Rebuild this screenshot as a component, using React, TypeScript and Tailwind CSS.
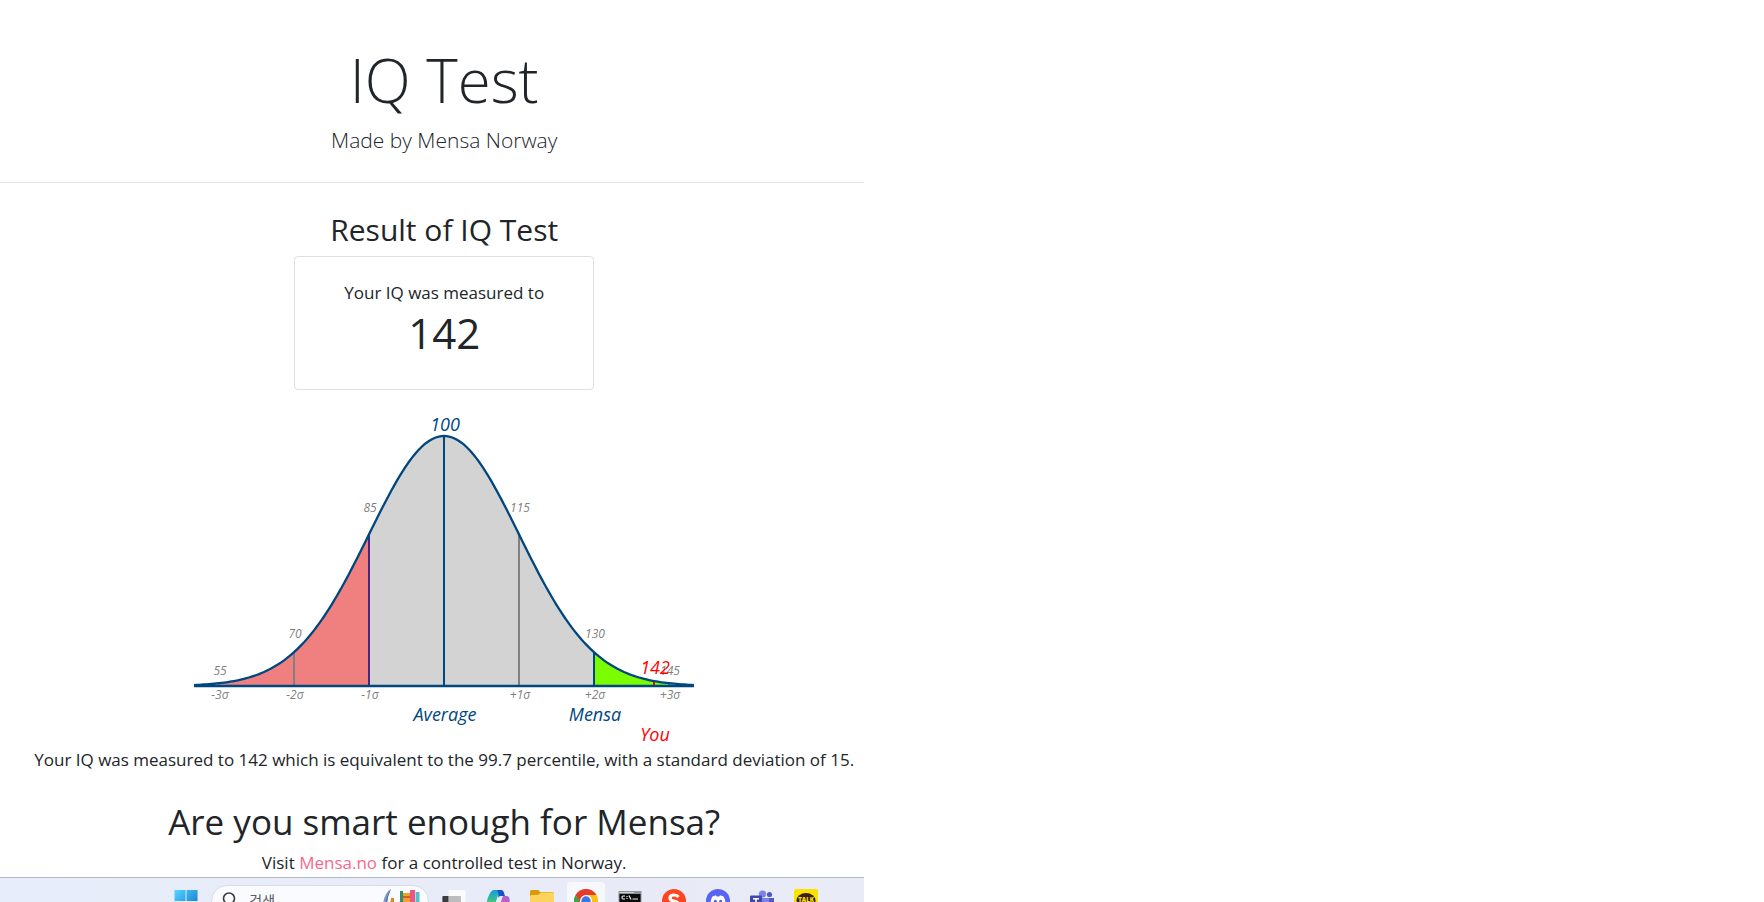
import React from "react";

const SIGMA = 75;
const CENTER = 250;
const BASE = 270;
const HEIGHT = 250;

const xOf = (iq: number) => CENTER + ((iq - 100) / 15) * SIGMA;
const yOf = (iq: number) => BASE - HEIGHT * Math.exp(-(((iq - 100) / 15) ** 2) / 2);

function curvePoints(from: number, to: number) {
  const points: string[] = [];
  for (let iq = from; iq <= to; iq += 0.5) {
    points.push(`${xOf(iq).toFixed(2)},${yOf(iq).toFixed(2)}`);
  }
  return points.join(" ");
}

function Area({ from, to, color }: { from: number; to: number; color: string }) {
  return <polygon fill={color} points={`${xOf(from)},${BASE} ${curvePoints(from, to)} ${xOf(to)},${BASE}`} />;
}

function Drop({ iq, color }: { iq: number; color: string }) {
  return <line x1={xOf(iq)} x2={xOf(iq)} y1={yOf(iq)} y2={BASE} stroke={color} strokeWidth={2} />;
}

const marks = [
  { iq: 55, y: 259, sigma: "-3σ" },
  { iq: 70, y: 222, sigma: "-2σ" },
  { iq: 85, y: 96, sigma: "-1σ" },
  { iq: 115, y: 96, sigma: "+1σ" },
  { iq: 130, y: 222, sigma: "+2σ" },
  { iq: 145, y: 259, sigma: "+3σ" },
];

function BellCurve() {
  return (
    <svg viewBox="0 0 500 330" role="img" aria-label="IQ distribution" className="mt-[26px] w-[500px] overflow-visible italic">
      <Area from={55} to={85} color="#f08080" />
      <Area from={85} to={130} color="#d3d3d3" />
      <Area from={130} to={145} color="#7cfc00" />
      <Drop iq={55} color="#808080" />
      <Drop iq={70} color="#808080" />
      <Drop iq={85} color="#4b2381" />
      <Drop iq={100} color="#00467f" />
      <Drop iq={115} color="#808080" />
      <Drop iq={130} color="#00467f" />
      <Drop iq={142} color="#ff0000" />
      <Drop iq={145} color="#808080" />
      <polyline fill="none" stroke="#00467f" strokeWidth={2.3} points={curvePoints(50, 150)} />
      <line x1={0} x2={500} y1={BASE} y2={BASE} stroke="#00467f" strokeWidth={2.6} />
      <g fill="#808080" fontSize={12} textAnchor="middle">
        {marks.map(({ iq, y, sigma }) => (
          <React.Fragment key={iq}>
            <text x={xOf(iq) + 1} y={y}>
              {iq}
            </text>
            <text x={xOf(iq) + 1} y={BASE + 13}>
              {sigma}
            </text>
          </React.Fragment>
        ))}
      </g>
      <g fill="#00467f" fontSize={18} textAnchor="middle">
        <text x={CENTER + 1} y={15}>
          100
        </text>
        <text x={CENTER + 1} y={BASE + 35}>
          Average
        </text>
        <text x={xOf(130) + 1} y={BASE + 35}>
          Mensa
        </text>
      </g>
      <g fill="#ff0000" fontSize={18} textAnchor="middle">
        <text x={xOf(142) + 1} y={258}>
          142
        </text>
        <text x={xOf(142) + 1} y={BASE + 55}>
          You
        </text>
      </g>
    </svg>
  );
}

function WindowsIcon() {
  return (
    <svg viewBox="0 0 24 24" className="size-6">
      <defs>
        <linearGradient id="win" x1="0" y1="0" x2="1" y2="1">
          <stop offset="0" stopColor="#55d6ff" />
          <stop offset="1" stopColor="#0669c9" />
        </linearGradient>
      </defs>
      <path fill="url(#win)" d="M.5 1H11.5V12H.5ZM12.5 1H23.5V12H12.5ZM.5 13H11.5V24H.5ZM12.5 13H23.5V24H12.5Z" />
    </svg>
  );
}

function TaskViewIcon() {
  return (
    <svg viewBox="0 0 24 24" className="size-6">
      <rect x="6.500" y="1" width="17" height="17" rx="1" fill="#fbfbfb" />
      <rect x=".5" y="7" width="18" height="17" rx="1" fill="#88888b" />
      <path d="M1.500 7H6.500V24H.5V8Q.5 7 1.500 7Z" fill="#3c3c3e" />
      <rect x="6.500" y="7" width="12" height="11" fill="#bcbcbf" />
    </svg>
  );
}

function CopilotIcon() {
  return (
    <svg viewBox="0 0 24 24" className="size-6">
      <defs>
        <linearGradient id="cp1" x1="0" y1="0" x2="0" y2="1">
          <stop offset="0" stopColor="#169be8" />
          <stop offset=".5" stopColor="#36c08c" />
          <stop offset="1" stopColor="#f0cf30" />
        </linearGradient>
        <linearGradient id="cp2" x1="1" y1="0" x2="0" y2="1">
          <stop offset="0" stopColor="#a45ce8" />
          <stop offset="1" stopColor="#f56a80" />
        </linearGradient>
      </defs>
      <path fill="url(#cp1)" d="M7 1H15L12 6 8 19Q7 21 4 21 0 21 0 17 2 4 7 1Z" />
      <path fill="#1652c8" d="M11 1H15Q17.500 1 18 4L19 7H15Q12.500 7 12 9 13 4 11 1Z" />
      <path fill="url(#cp2)" d="M17 7H21Q24.500 8 23.500 13 22 22 18 23H9Q12 22 14 15Z" />
    </svg>
  );
}

function FolderIcon() {
  return (
    <svg viewBox="0 0 24 24" className="size-6">
      <path fill="#d99b0c" d="M1.500 1H8Q9 1 10 3H22Q24 3 24 5V20H0V2.500Q0 1 1.500 1Z" />
      <path fill="#ffd45c" d="M0 7.500Q0 6 2 6H8L11 3.500H22.500Q24 3.500 24 5V20Q24 22 22 22H2Q0 22 0 20Z" />
    </svg>
  );
}

function ChromeIcon() {
  return (
    <svg viewBox="0 0 24 24" className="size-6">
      <circle cx="12" cy="12" r="12" fill="#fbc116" />
      <path fill="#e33b2e" d="M1.600 6A12 12 0 0 1 22.400 6H12L6.800 15Z" />
      <path fill="#2da94f" d="M1.600 6 6.800 15Q9 18 12 18L17.200 15 12 24A12 12 0 0 1 1.600 6Z" />
      <circle cx="12" cy="12" r="6" fill="#fff" />
      <circle cx="12" cy="12" r="4.700" fill="#3b78e7" />
    </svg>
  );
}

function TerminalIcon() {
  return (
    <svg viewBox="0 0 24 24" className="size-6">
      <path fill="#8d949c" d="M.5 2H23.500V22H.5Z" />
      <path fill="#c9ced3" d="M1.500 3H16V4H1.500Z" />
      <path fill="#0b0b0b" d="M1.500 5H22.500V21H1.500Z" />
      <path fill="none" stroke="#f2f2f2" strokeWidth="1.200" d="M7 7H5Q4 7 4 8.500T5 10H7M9 7V8M9 9V10M11 6.500 13 10.500M14.500 10H20" />
    </svg>
  );
}

function LetterSIcon() {
  return (
    <svg viewBox="0 0 24 24" className="size-6">
      <circle cx="12" cy="12" r="12" fill="#ff4420" />
      <path fill="none" stroke="#fff" strokeWidth="3.200" d="M16.500 8Q15 6 12 6 8 6 8 9 8 11.500 12 12T16 15Q16 18 12 18 9 18 7.500 16" />
    </svg>
  );
}

function DiscordIcon() {
  return (
    <svg viewBox="0 0 24 24" className="size-6">
      <circle cx="12" cy="12" r="12" fill="#5865f2" />
      <path fill="#fff" d="M6.500 7.500 10 6.300 10.600 7.400H13.400L14 6.300 17.500 7.500Q20 11.500 19.500 16.200L16 18 15 16.500H9L8 18 4.500 16.200Q4 11.500 6.500 7.500Z" />
      <circle cx="9.300" cy="12.300" r="1.600" fill="#5865f2" />
      <circle cx="14.700" cy="12.300" r="1.600" fill="#5865f2" />
    </svg>
  );
}

function TeamsIcon() {
  return (
    <svg viewBox="0 0 24 24" className="size-6">
      <circle cx="12.500" cy="5" r="3.600" fill="#7b83eb" />
      <circle cx="19.500" cy="5.500" r="2.600" fill="#5059c9" />
      <path fill="#5059c9" d="M15 9H24V15Q24 20 19 20H15Z" />
      <path fill="#7b83eb" d="M8 9H19V17Q18 23 12 23 8 22 8 17Z" />
      <rect y="6.500" width="12" height="12" rx="1" fill="#4048a8" />
      <path fill="#fff" d="M3 9H9V10.400H6.800V16H5.200V10.400H3Z" />
    </svg>
  );
}

function TalkIcon() {
  return (
    <svg viewBox="0 0 24 24" className="size-6">
      <rect width="24" height="24" rx="2" fill="#fae300" />
      <ellipse cx="12" cy="11.500" rx="9.500" ry="7.500" fill="#3b1e1e" />
      <text x="12" y="13" textAnchor="middle" fill="#fae300" fontSize="6" fontWeight="800">
        TALK
      </text>
    </svg>
  );
}

function SearchHighlight() {
  return (
    <svg viewBox="0 0 38 24" className="ml-auto h-6 w-[38px]">
      <path fill="#7d9cc4" d="M9 0Q2 4 1 16H5Q5 8 9 0Z" />
      <path fill="#4d6c96" d="M9 0Q4 7 3.500 16H5Q5 8 9 0Z" />
      <path fill="#d58a2c" d="M9 9H12V16H8Z" />
      <path fill="#2f8f6b" d="M18 2H21V20H18Z" />
      <path fill="#f0a02c" d="M21 4H28V20H21Z" />
      <path fill="#de5a2a" d="M21 7H28V9H21Z" />
      <path fill="#ec5680" d="M28 1H33V20H28Z" />
      <path fill="#4fc0cc" d="M33.500 3H37.500V20H33.500Z" />
    </svg>
  );
}

const apps = [
  { name: "Task view", Icon: TaskViewIcon },
  { name: "Copilot", Icon: CopilotIcon },
  { name: "File Explorer", Icon: FolderIcon },
  { name: "Chrome", Icon: ChromeIcon, active: true },
  { name: "Command Prompt", Icon: TerminalIcon },
  { name: "S", Icon: LetterSIcon },
  { name: "Discord", Icon: DiscordIcon },
  { name: "Teams", Icon: TeamsIcon },
  { name: "KakaoTalk", Icon: TalkIcon },
];

function Taskbar() {
  return (
    <footer className="flex h-[25px] items-start justify-end overflow-hidden border-t border-[#b4b9c6] bg-linear-to-r from-[#e7edfa] to-[#e9ebf6] pt-1 pr-9">
      <button aria-label="Start" className="flex h-10 w-11 shrink-0 items-start justify-center pt-[7px]">
        <WindowsIcon />
      </button>
      <label className="mx-[3px] mt-[3px] flex h-8 w-[218px] shrink-0 items-center rounded-full border border-[#d8dcea] bg-[#f9fbff] pr-2 pl-[11px]">
        <svg viewBox="0 0 14 16" className="h-4 w-[14px] shrink-0 overflow-visible">
          <path d="M6 0A5.500 5.500 0 1 1 6 11A5.500 5.500 0 1 1 6 0ZM10 10 14 14" fill="none" stroke="#3a3a3a" strokeWidth="1.600" />
        </svg>
        <input
          aria-label="검색"
          placeholder="검색"
          className="ml-3 w-28 min-w-0 bg-transparent font-['Open_Sans','Noto_Sans_CJK_KR',sans-serif] text-sm outline-none placeholder:text-[#5a5a5f]"
        />
        <SearchHighlight />
      </label>
      {apps.map(({ name, Icon, active }) => (
        <button key={name} aria-label={name} className="flex w-11 shrink-0 justify-center">
          <span
            className={
              active
                ? "flex h-10 w-[38px] items-start justify-center rounded bg-[#f6f8fc] pt-[7px]"
                : "flex h-10 w-[38px] items-start justify-center pt-[7px]"
            }
          >
            <Icon />
          </span>
        </button>
      ))}
    </footer>
  );
}

export default function App() {
  return (
    <div className="min-h-screen bg-white font-['Open_Sans','Noto_Sans',sans-serif] text-[#212529]">
      <div className="w-[49%]">
        <header className="border-b border-[#e3e3e3] pt-[42px] pb-[26px] pl-6 text-center">
          <h1 className="text-[60px] leading-[76px] font-light">IQ Test</h1>
          <p className="mt-[6px] text-[21px] leading-8 font-light">Made by Mensa Norway</p>
        </header>
        <main className="flex flex-col items-center pt-[29px] pl-6 text-center text-[17px] leading-7">
          <h2 className="text-[30px] leading-9">Result of IQ Test</h2>
          <section className="mt-2 w-[300px] rounded border border-[#dfdfdf] px-6 pt-[22px] pb-8">
            <p>Your IQ was measured to</p>
            <p className="mt-[2px] text-[42px] leading-[48px]">142</p>
          </section>
          <BellCurve />
          <p className="whitespace-nowrap">
            Your IQ was measured to 142 which is equivalent to the 99.7 percentile, with a standard deviation of 15.
          </p>
          <h2 className="mt-[26px] text-[35px] leading-[44px]">Are you smart enough for Mensa?</h2>
          <p className="mt-[5px]">
            Visit{" "}
            <a href="https://www.mensa.no" className="text-[#f76890]">
              Mensa.no
            </a>{" "}
            for a controlled test in Norway.
          </p>
        </main>
        <Taskbar />
      </div>
    </div>
  );
}
